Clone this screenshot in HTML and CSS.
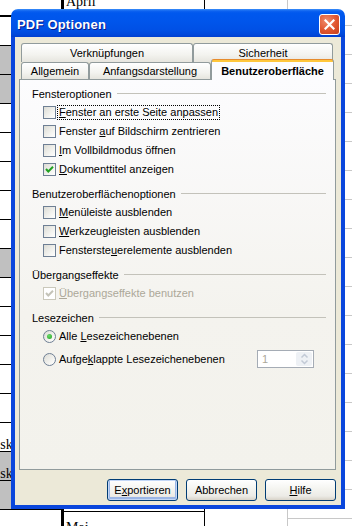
FILE: index.html
```html
<!DOCTYPE html>
<html lang="de">
<head>
  <meta charset="UTF-8">
  <title>PDF Optionen</title>
  <link rel="stylesheet" href="styles.css">
</head>
<body>
  <!-- spreadsheet behind the dialog -->
  <div class="sheet">
    <div class="col col-a">
      <div class="cell cell-top"></div>
      <div class="cell"></div>
      <div class="cell shade"></div>
      <div class="cell shade"></div>
      <div class="cell"></div>
      <div class="cell"></div>
      <div class="cell"></div>
      <div class="cell"></div>
      <div class="cell"></div>
      <div class="cell shade"></div>
      <div class="cell"></div>
      <div class="cell"></div>
      <div class="cell"></div>
      <div class="cell"></div>
      <div class="cell"></div>
      <div class="cell"><span>Risk</span></div>
      <div class="cell shade"><span>Risk</span></div>
      <div class="cell shade"></div>
      <div class="cell"></div>
    </div>
    <div class="col col-b">
      <div class="month month-top">April</div>
      <div class="month month-bottom">Mai</div>
    </div>
    <div class="col col-c"></div>
    <div class="col col-d"></div>
  </div>

  <div class="dialog">
    <div class="titlebar">
      <span class="title">PDF Optionen</span>
      <button class="close" aria-label="Schließen">
        <svg width="11" height="11" viewBox="0 0 11 11">
          <path d="M1.5 1.5 L9.5 9.5 M9.5 1.5 L1.5 9.5" stroke="#fff" stroke-width="2.2" stroke-linecap="square"/>
        </svg>
      </button>
    </div>

    <div class="client">
      <div class="tabs">
        <div class="tab-row">
          <div class="tab tab-links">Verknüpfungen</div>
          <div class="tab tab-security">Sicherheit</div>
        </div>
        <div class="tab-row">
          <div class="tab tab-general">Allgemein</div>
          <div class="tab tab-initial">Anfangsdarstellung</div>
          <div class="tab tab-ui active">Benutzeroberfläche</div>
        </div>
      </div>

      <div class="panel">
        <div class="group">
          <div class="group-head">Fensteroptionen</div>
          <label class="option"><span class="box"></span><span class="text focus"><u>F</u>enster an erste Seite anpassen</span></label>
          <label class="option"><span class="box"></span><span class="text">Fenster <u>a</u>uf Bildschirm zentrieren</span></label>
          <label class="option"><span class="box"></span><span class="text"><u>I</u>m Vollbildmodus öffnen</span></label>
          <label class="option">
            <span class="box">
              <svg width="11" height="11" viewBox="0 0 11 11"><path d="M2 5 L4.3 7.5 L9 2.8" fill="none" stroke="#21A121" stroke-width="2"/></svg>
            </span>
            <span class="text"><u>D</u>okumenttitel anzeigen</span>
          </label>
        </div>

        <div class="group">
          <div class="group-head">Benutzeroberflächenoptionen</div>
          <label class="option"><span class="box"></span><span class="text"><u>M</u>enüleiste ausblenden</span></label>
          <label class="option"><span class="box"></span><span class="text"><u>W</u>erkzeugleisten ausblenden</span></label>
          <label class="option"><span class="box"></span><span class="text">Fensterste<u>u</u>erelemente ausblenden</span></label>
        </div>

        <div class="group">
          <div class="group-head">Übergangseffekte</div>
          <label class="option disabled">
            <span class="box">
              <svg width="11" height="11" viewBox="0 0 11 11"><path d="M2 5 L4.3 7.5 L9 2.8" fill="none" stroke="#C4C3B8" stroke-width="2"/></svg>
            </span>
            <span class="text"><u>Ü</u>bergangseffekte benutzen</span>
          </label>
        </div>

        <div class="group">
          <div class="group-head">Lesezeichen</div>
          <label class="option"><span class="radio on"></span><span class="text">Alle <u>L</u>esezeichenebenen</span></label>
          <label class="option option-spin">
            <span class="radio"></span><span class="text">Aufge<u>k</u>lappte Lesezeichenebenen</span>
            <span class="spin">
              <span class="spin-value">1</span>
              <span class="spin-buttons">
                <svg width="15" height="14" viewBox="0 0 15 14">
                  <path d="M4.5 5.5 L7.5 2.5 L10.5 5.5 M4.5 8.5 L7.5 11.5 L10.5 8.5" fill="none" stroke="#C2CAD6" stroke-width="1.5"/>
                </svg>
              </span>
            </span>
          </label>
        </div>
      </div>

      <div class="buttons">
        <button class="btn default">E<u>x</u>portieren</button>
        <button class="btn">Abbrechen</button>
        <button class="btn"><u>H</u>ilfe</button>
      </div>
    </div>
  </div>
</body>
</html>
```

FILE: styles.css
```css
* {
  box-sizing: border-box;
  margin: 0;
  padding: 0;
}

body {
  width: 352px;
  height: 526px;
  overflow: hidden;
  position: relative;
  background: #fff;
  font-family: "Liberation Sans", Arial, sans-serif;
  font-size: 11px;
  color: #000;
}

/* ---------- spreadsheet background ---------- */

.sheet {
  display: flex;
  height: 526px;
  font-family: "Liberation Serif", "Times New Roman", serif;
  font-size: 14px;
}

.col {
  height: 100%;
  flex: none;
}

.col-a {
  width: 61px;
  display: flex;
  flex-direction: column;
}

.cell {
  flex: none;
  height: 29px;
  border-bottom: 1px solid #000;
  display: flex;
  align-items: flex-end;
  white-space: nowrap;
  overflow: hidden;
  line-height: 13px;
}

.cell span {
  margin-left: -13px;
}

.cell-top {
  height: 17px;
  border-bottom: 2px solid #000;
}

.shade {
  background: #C0C0C0;
}

.col-b {
  width: 144px;
  border-left: 3px solid #000;
  border-right: 1px solid #000;
  display: flex;
  flex-direction: column;
  justify-content: space-between;
}

.month {
  padding-left: 2px;
  line-height: 14px;
}

.month-top {
  margin-top: -5px;
}

.month-bottom {
  height: 15px;
  border-top: 1px solid #000;
  padding-top: 9px;
  overflow: hidden;
}

.col-c {
  width: 83px;
  border-right: 1px solid #C8C8C8;
}

.col-d {
  flex: 1;
  background: repeating-linear-gradient(to bottom, transparent 0 28px, #C8C8C8 28px 29px);
  background-position: 0 -3px;
}

/* ---------- dialog window ---------- */

.dialog {
  position: absolute;
  left: 11px;
  top: 9px;
  width: 334px;
  height: 500px;
  display: flex;
  flex-direction: column;
  border-radius: 7px 7px 0 0;
}

.titlebar {
  height: 28px;
  flex: none;
  display: flex;
  align-items: center;
  justify-content: space-between;
  padding: 3px 5px 0 6px;
  border-radius: 7px 7px 0 0;
  background: linear-gradient(to bottom, #3C8FF9 0, #0D62F0 2px, #0058EE 4px, #0055EB 45%, #0050E5 75%, #0049DC 90%, #003FCF 100%);
}

.title {
  color: #fff;
  font-size: 13px;
  font-weight: bold;
  text-shadow: 1px 1px #0A1C8C;
  letter-spacing: 0.2px;
}

.close {
  width: 21px;
  height: 21px;
  border: 1px solid #fff;
  border-radius: 3px;
  background: radial-gradient(circle at 35% 30%, #F08C6D, #E0552F 55%, #C4401E);
  display: flex;
  align-items: center;
  justify-content: center;
}

.client {
  flex: 1;
  display: flex;
  flex-direction: column;
  background: #ECE9D8;
  border: 4px solid #0A46DC;
  border-top: none;
  padding: 6px 5px 0 4px;
}

/* ---------- tabs ---------- */

.tabs {
  display: flex;
  flex-direction: column;
  padding-left: 2px;
}

.tab-row {
  display: flex;
  height: 19px;
}

.tab-row + .tab-row {
  height: 17px;
}

.tab {
  height: 100%;
  flex: none;
  display: flex;
  align-items: center;
  justify-content: center;
  border: 1px solid #919B9C;
  border-bottom: none;
  border-radius: 3px 3px 0 0;
  background: linear-gradient(to bottom, #FFFFFF, #F3F3EF 60%, #E6E5DE);
}

.tab-links { width: 172px; }
.tab-security { width: 140px; }
.tab-general { width: 68px; }
.tab-initial { width: 122px; }
.tab-ui { width: 123px; }

.tab.active {
  position: relative;
  z-index: 1;
  height: 21px;
  margin-top: -3px;
  font-weight: bold;
  border-top: 1px solid #E68B2C;
  background: linear-gradient(to bottom, #FFC73C 0 2px, #FCFCFE 2px);
  padding-top: 2px;
}

/* ---------- tab panel ---------- */

.panel {
  height: 391px;
  flex: none;
  border: 1px solid #919B9C;
  background: linear-gradient(to bottom, #FCFCFE, #F4F3EE 60%, #F3F2EC);
  padding: 4px 9px 0 12px;
  display: flex;
  flex-direction: column;
  gap: 5px;
}

.group-head {
  height: 19px;
  display: flex;
  align-items: center;
  gap: 5px;
}

.group-head::after {
  content: "";
  flex: 1;
  border-top: 1px solid #C3C2BA;
}

.option {
  height: 19px;
  display: flex;
  align-items: center;
  gap: 3px;
  padding-left: 11px;
}

.text {
  line-height: 13px;
  white-space: nowrap;
}

.focus {
  outline: 1px dotted #000;
  outline-offset: 0;
  padding: 0 1px;
  margin-left: -1px;
}

.box {
  width: 13px;
  height: 13px;
  flex: none;
  border: 1px solid #6E7F94;
  background: linear-gradient(135deg, #DCDCD5, #F6F6F3 70%, #FFFFFF);
  display: flex;
  align-items: center;
  justify-content: center;
}

.disabled .box {
  border-color: #CAC8BB;
  background: #FFFFFF;
}

.disabled .text {
  color: #ACA899;
}

.radio {
  width: 13px;
  height: 13px;
  flex: none;
  border: 1px solid #6E7F94;
  border-radius: 50%;
  background: linear-gradient(135deg, #DCDCD5, #F6F6F3 70%, #FFFFFF);
  display: flex;
  align-items: center;
  justify-content: center;
}

.radio.on::after {
  content: "";
  width: 5px;
  height: 5px;
  border-radius: 50%;
  background: radial-gradient(circle at 40% 35%, #6BDA6B, #21A121);
}

.option-spin {
  height: 20px;
  margin-top: 3px;
}

.spin {
  margin-left: auto;
  margin-right: 12px;
  width: 57px;
  height: 18px;
  border: 1px solid #A5ACB5;
  background: #FFFFFF;
  display: flex;
  align-items: center;
  justify-content: space-between;
  padding: 0 1px 0 4px;
  color: #ACA899;
}

.spin-buttons {
  width: 16px;
  height: 14px;
  border-radius: 2px;
  background: #EEF1F5;
  display: flex;
  align-items: center;
  justify-content: center;
}

/* ---------- buttons ---------- */

.buttons {
  display: flex;
  justify-content: flex-end;
  gap: 8px;
  padding-top: 9px;
}

.btn {
  width: 71px;
  height: 22px;
  border: 1px solid #003C74;
  border-radius: 3px;
  background: linear-gradient(to bottom, #FFFFFF, #F4F4F0 45%, #ECEBE6 80%, #D8D3C8);
  font-family: "Liberation Sans", Arial, sans-serif;
  font-size: 11px;
  color: #000;
}

.btn.default {
  box-shadow: inset 0 0 0 1px #C3D7F7, inset 0 -1px 0 2px #9BB6E6;
}
```
